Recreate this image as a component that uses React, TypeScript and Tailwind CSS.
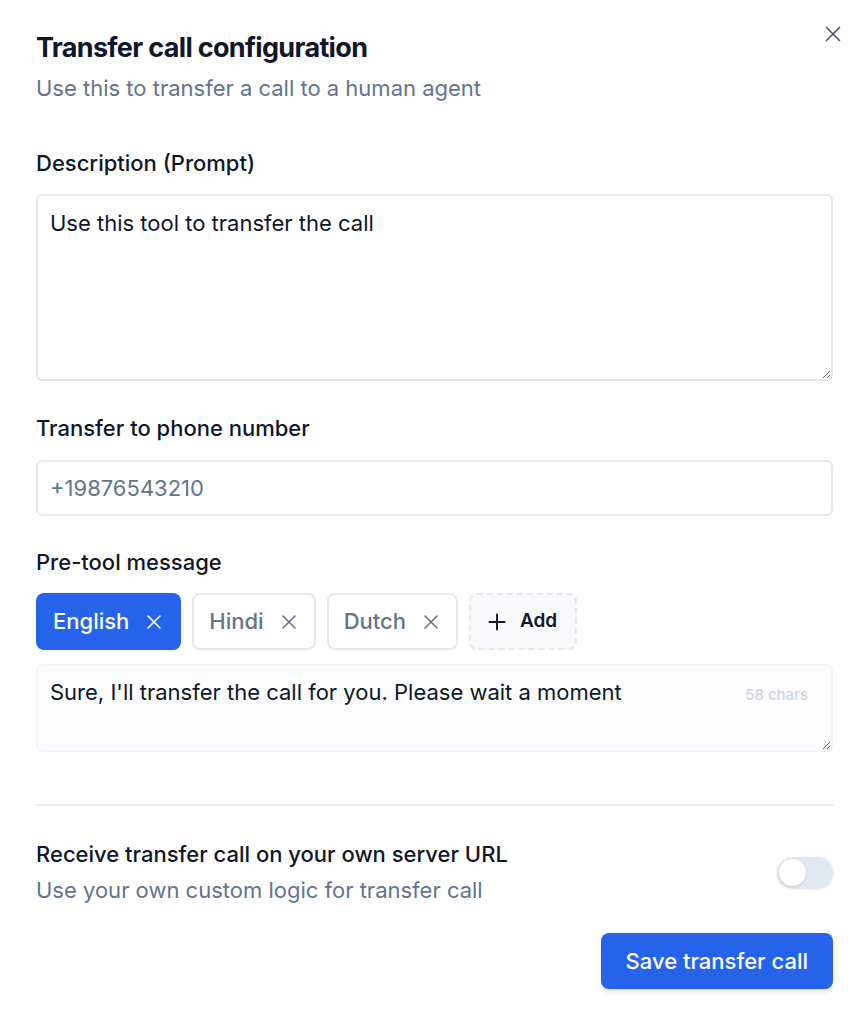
import { X, Plus } from 'lucide-react';

const langs = [
  { name: 'English', active: true },
  { name: 'Hindi', active: false },
  { name: 'Dutch', active: false },
];

export default function App() {
  return (
    <div className="min-h-[1024px] bg-white font-['Inter',sans-serif] text-slate-900">
      <div className="relative pl-9 pr-8 pt-[30px]">
        <button className="absolute right-[19px] top-[21px] text-slate-600">
          <X size={26} strokeWidth={1.5} />
        </button>

        {/* En-tête */}
        <h1 className="text-[27px] leading-9 font-bold tracking-[-0.025em]">Transfer call configuration</h1>
        <p className="mt-[7px] text-[22px] leading-[30px] text-slate-500">Use this to transfer a call to a human agent</p>

        {/* Description */}
        <label className="mt-[45px] block text-[22px] leading-[30px] font-medium">Description (Prompt)</label>
        <textarea
          defaultValue="Use this tool to transfer the call"
          className="mt-[16px] block h-[187px] w-full resize-y rounded-md border-2 border-slate-200 px-[12px] py-[12px] text-[22px] leading-[30px] outline-none"
        />

        {/* Téléphone */}
        <label className="mt-[32px] block text-[22px] leading-[30px] font-medium">Transfer to phone number</label>
        <input
          placeholder="+19876543210"
          className="mt-[17px] block h-[56px] w-full rounded-md border-2 border-slate-200 px-[12px] text-[22px] outline-none placeholder:text-slate-500"
        />

        {/* Message */}
        <label className="mt-[31px] block text-[22px] leading-[30px] font-medium">Pre-tool message</label>
        <div className="mt-[16px] flex gap-[11px]">
          {langs.map((l) => (
            <div
              key={l.name}
              className={
                l.active
                  ? 'flex h-[57px] items-center gap-[13px] rounded-lg bg-[#2563eb] pl-[17px] pr-[15px] text-[22px] font-medium text-white'
                  : 'flex h-[57px] items-center gap-[13px] rounded-lg border-2 border-slate-200 pl-[15px] pr-[13px] text-[22px] font-medium text-slate-500'
              }
            >
              {l.name}
              <X size={24} strokeWidth={1.6} />
            </div>
          ))}
          <div className="flex h-[57px] items-center gap-[10px] rounded-lg border-2 border-dashed border-slate-200 bg-slate-50 pl-[13px] pr-[18px] text-[19px] font-semibold text-slate-900">
            <Plus size={26} strokeWidth={1.8} />
            Add
          </div>
        </div>
        <div className="relative mt-[14px]">
          <textarea
            defaultValue="Sure, I'll transfer the call for you. Please wait a moment"
            className="block h-[88px] w-full resize-y rounded-md border-2 border-slate-100 bg-slate-50/60 px-[12px] py-[11px] text-[22px] leading-[30px] outline-none"
          />
          <span className="absolute right-[18px] top-[14px] rounded bg-white/40 px-[7px] py-[8px] text-[15px] leading-[18px] font-medium text-slate-300">58 chars</span>
        </div>

        <div className="mt-[52px] h-[2px] bg-slate-200" />

        {/* Serveur */}
        <div className="mt-[33px] flex items-center justify-between">
          <div>
            <div className="text-[22px] leading-[30px] font-medium">Receive transfer call on your own server URL</div>
            <div className="mt-[6px] text-[22px] leading-[30px] text-slate-500">Use your own custom logic for transfer call</div>
          </div>
          <div className="flex h-[31px] w-[56px] items-center rounded-full bg-slate-200 p-[2px] shadow-sm">
            <div className="h-[27px] w-[27px] rounded-full bg-white shadow" />
          </div>
        </div>

        <div className="mt-[28px] flex justify-end">
          <button className="h-[56px] rounded-lg bg-[#2563eb] px-[25px] text-[22px] font-medium text-white shadow-md">
            Save transfer call
          </button>
        </div>
      </div>
    </div>
  );
}
